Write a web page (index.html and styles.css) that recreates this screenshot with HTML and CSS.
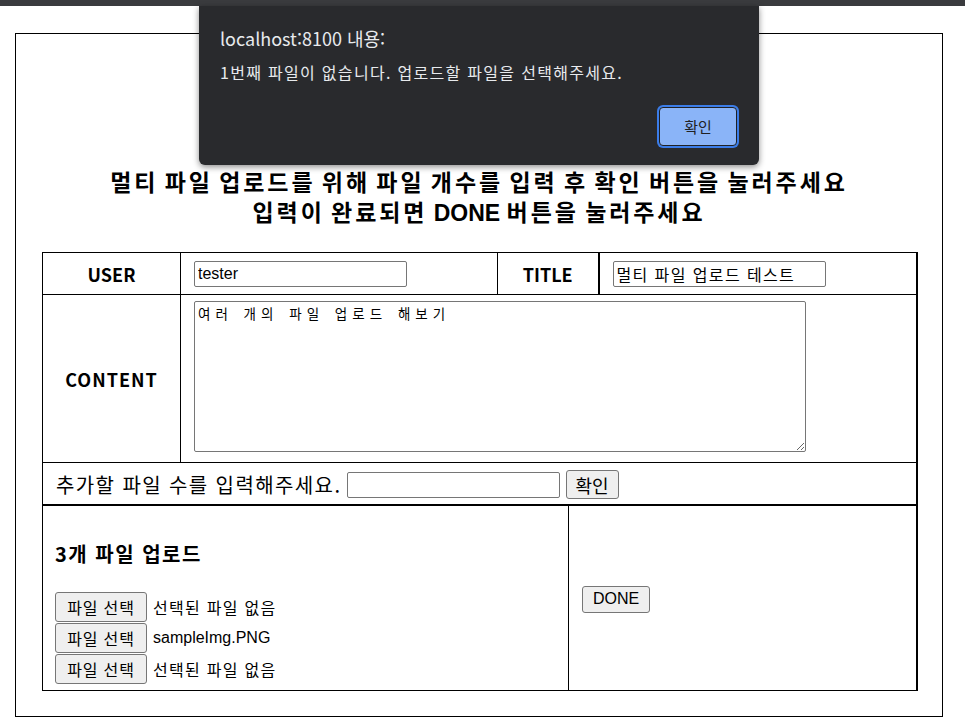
FILE: index.html
```html
<!DOCTYPE html>
<html lang="ko">
<head>
<meta charset="utf-8">
<title>multi upload</title>
<link rel="stylesheet" href="styles.css">
</head>
<body>
<div class="page">
  <div class="box">
    <h2 class="heading"><span class="hline">멀티 파일 업로드를 위해 파일 개수를 입력 후 확인 버튼을 눌러주세요</span><span class="hline">입력이 완료되면 <span class="latin">DONE</span> 버튼을 눌러주세요</span></h2>
    <table class="form">
      <colgroup>
        <col class="col1">
        <col class="col2">
        <col class="col3">
        <col class="col4">
      </colgroup>
      <tr class="r1">
        <th class="c-label">USER</th>
        <td class="c-user"><input class="txt" type="text" value="tester"></td>
        <th class="c-title">TITLE</th>
        <td class="c-tval"><input class="txt kor" type="text" value="멀티 파일 업로드 테스트"></td>
      </tr>
      <tr class="r2">
        <th class="c-label wide">CONTENT</th>
        <td colspan="3" class="c-content"><textarea class="area">여러 개의 파일 업로드 해보기</textarea></td>
      </tr>
      <tr class="r3">
        <td colspan="4" class="c-count"><span class="count-label">추가할 파일 수를 입력해주세요.</span> <input class="txt count" type="text"> <button class="btn big">확인</button></td>
      </tr>
      <tr class="r4">
        <td colspan="4" class="c-files">
          <div class="files">
            <div class="files-left">
              <p class="files-title">3개 파일 업로드</p>
              <div class="file-row"><button class="btn">파일 선택</button><span class="fname kor">선택된 파일 없음</span></div>
              <div class="file-row"><button class="btn">파일 선택</button><span class="fname">sampleImg.PNG</span></div>
              <div class="file-row"><button class="btn">파일 선택</button><span class="fname kor">선택된 파일 없음</span></div>
            </div>
            <div class="files-right">
              <button class="btn">DONE</button>
            </div>
          </div>
        </td>
      </tr>
    </table>
  </div>
</div>

<div class="chrome-strip"></div>
<div class="alert">
  <div class="alert-title">localhost:8100 내용:</div>
  <div class="alert-msg">1번째 파일이 없습니다. 업로드할 파일을 선택해주세요.</div>
  <div class="alert-actions"><button class="alert-ok">확인</button></div>
</div>
</body>
</html>
```
FILE: styles.css
```css
html, body {
  margin: 0;
  padding: 0;
  background: #fff;
}
body {
  font-family: "Noto Sans CJK KR", "Noto Sans", sans-serif;
  color: #000;
}
.page {
  padding: 33px 0 0 15px;
}
.box {
  box-sizing: border-box;
  width: 928px;
  height: 684px;
  border: 1px solid #000;
  padding-top: 134px;
}
.heading {
  margin: 0;
  text-align: center;
  font-family: "Liberation Sans", "Noto Sans CJK KR", sans-serif;
  font-size: 23px;
  line-height: 30px;
  font-weight: 700;
  letter-spacing: 2.9px;
  word-spacing: -2.9px;
}
.hline {
  display: block;
}
.heading .latin {
  letter-spacing: 0;
}
.form {
  margin: 24px 0 0 26px;
  width: 876px;
  table-layout: fixed;
  border-collapse: collapse;
  border-right: 2px solid #000;
}
.col1 { width: 138px; }
.col2 { width: 317px; }
.col3 { width: 101px; }
.col4 { width: auto; }
.form th, .form td {
  border: 1px solid #000;
  padding: 0;
}
.form th {
  font-size: 18px;
  font-weight: 700;
  text-align: center;
}
.form th.wide {
  letter-spacing: 1px;
}
.c-user { padding-left: 13px !important; }
.c-title { border-right: 2px solid #000 !important; }
.c-tval { padding-left: 13px !important; }
.r1 { height: 42px; }
.r2 { height: 168px; }
.r3 { height: 42px; }
.r4 { height: 185px; border-top: 2px solid #000; }
.txt {
  box-sizing: border-box;
  width: 213px;
  height: 26px;
  border: 1px solid #767676;
  border-radius: 2px;
  padding: 1px 3px;
  font-family: "Liberation Sans", "Noto Sans CJK KR", sans-serif;
  font-size: 16px;
  color: #000;
  vertical-align: middle;
}
.txt.kor {
  letter-spacing: 1.4px;
}
.c-content {
  padding: 5px 0 10px 13px !important;
}
.area {
  display: block;
  box-sizing: border-box;
  width: 612px;
  height: 151px;
  border: 1px solid #767676;
  border-radius: 2px;
  padding: 2px 3px;
  font-family: "Noto Sans CJK KR", monospace;
  font-size: 13.5px;
  letter-spacing: 5px;
  word-spacing: 2px;
  line-height: 18px;
  resize: vertical;
}
.c-count {
  padding-left: 13px !important;
  font-size: 20px;
}
.count-label {
  vertical-align: middle;
  letter-spacing: 1.4px;
}
.btn {
  box-sizing: border-box;
  background: #efefef;
  border: 1px solid #767676;
  border-radius: 3px;
  font-family: "Liberation Sans", "Noto Sans CJK KR", sans-serif;
  font-size: 16px;
  color: #000;
  padding: 0 7px;
  height: 27px;
}
.btn.big {
  font-size: 18px;
  height: 29px;
  width: 53px;
  padding: 0;
  vertical-align: middle;
}
.c-files {
  padding: 0 !important;
}
.files {
  display: flex;
  height: 184px;
}
.files-left {
  box-sizing: border-box;
  width: 526px;
  border-right: 1px solid #000;
  padding: 36px 0 0 12px;
}
.files-title {
  margin: 0 0 26px;
  font-size: 20px;
  font-weight: 700;
  line-height: 24px;
  letter-spacing: 1.5px;
}
.file-row {
  display: flex;
  align-items: center;
  gap: 6px;
  height: 31px;
  font-family: "Liberation Sans", "Noto Sans CJK KR", sans-serif;
  font-size: 16px;
}
.fname.kor {
  letter-spacing: 1.3px;
}
.file-row .btn {
  height: 30px;
  width: 92px;
  padding: 0;
  letter-spacing: 0.8px;
}
.files-right {
  flex: 1;
  display: flex;
  align-items: center;
  padding: 3px 0 0 13px;
}
.files-right .btn {
  height: 27px;
  width: 68px;
  padding: 0;
}

/* browser alert overlay */
.chrome-strip {
  position: absolute;
  left: 0;
  top: 0;
  width: 965px;
  height: 6px;
  background: #3a3b3e;
}
.alert {
  position: absolute;
  left: 199px;
  top: 6px;
  width: 560px;
  height: 159px;
  box-sizing: border-box;
  background: #292a2d;
  border-radius: 0 0 6px 6px;
  box-shadow: 0 2px 6px rgba(0,0,0,0.45);
  padding: 19px 22px 0 21px;
  color: #e8eaed;
  font-family: "Noto Sans CJK KR", "Liberation Sans", sans-serif;
}
.alert-title {
  font-size: 18px;
  line-height: 26px;
}
.alert-msg {
  margin-top: 11px;
  font-size: 16px;
  line-height: 20px;
  letter-spacing: 1.3px;
}
.alert-actions {
  display: flex;
  justify-content: flex-end;
  margin-top: 25px;
}
.alert-ok {
  box-sizing: border-box;
  width: 78px;
  height: 39px;
  background: #8ab4f8;
  border: 1px solid #202124;
  border-radius: 4px;
  box-shadow: 0 0 0 2px #3b7de9;
  color: #202124;
  font-family: "Noto Sans CJK KR", sans-serif;
  font-size: 15px;
}
```
